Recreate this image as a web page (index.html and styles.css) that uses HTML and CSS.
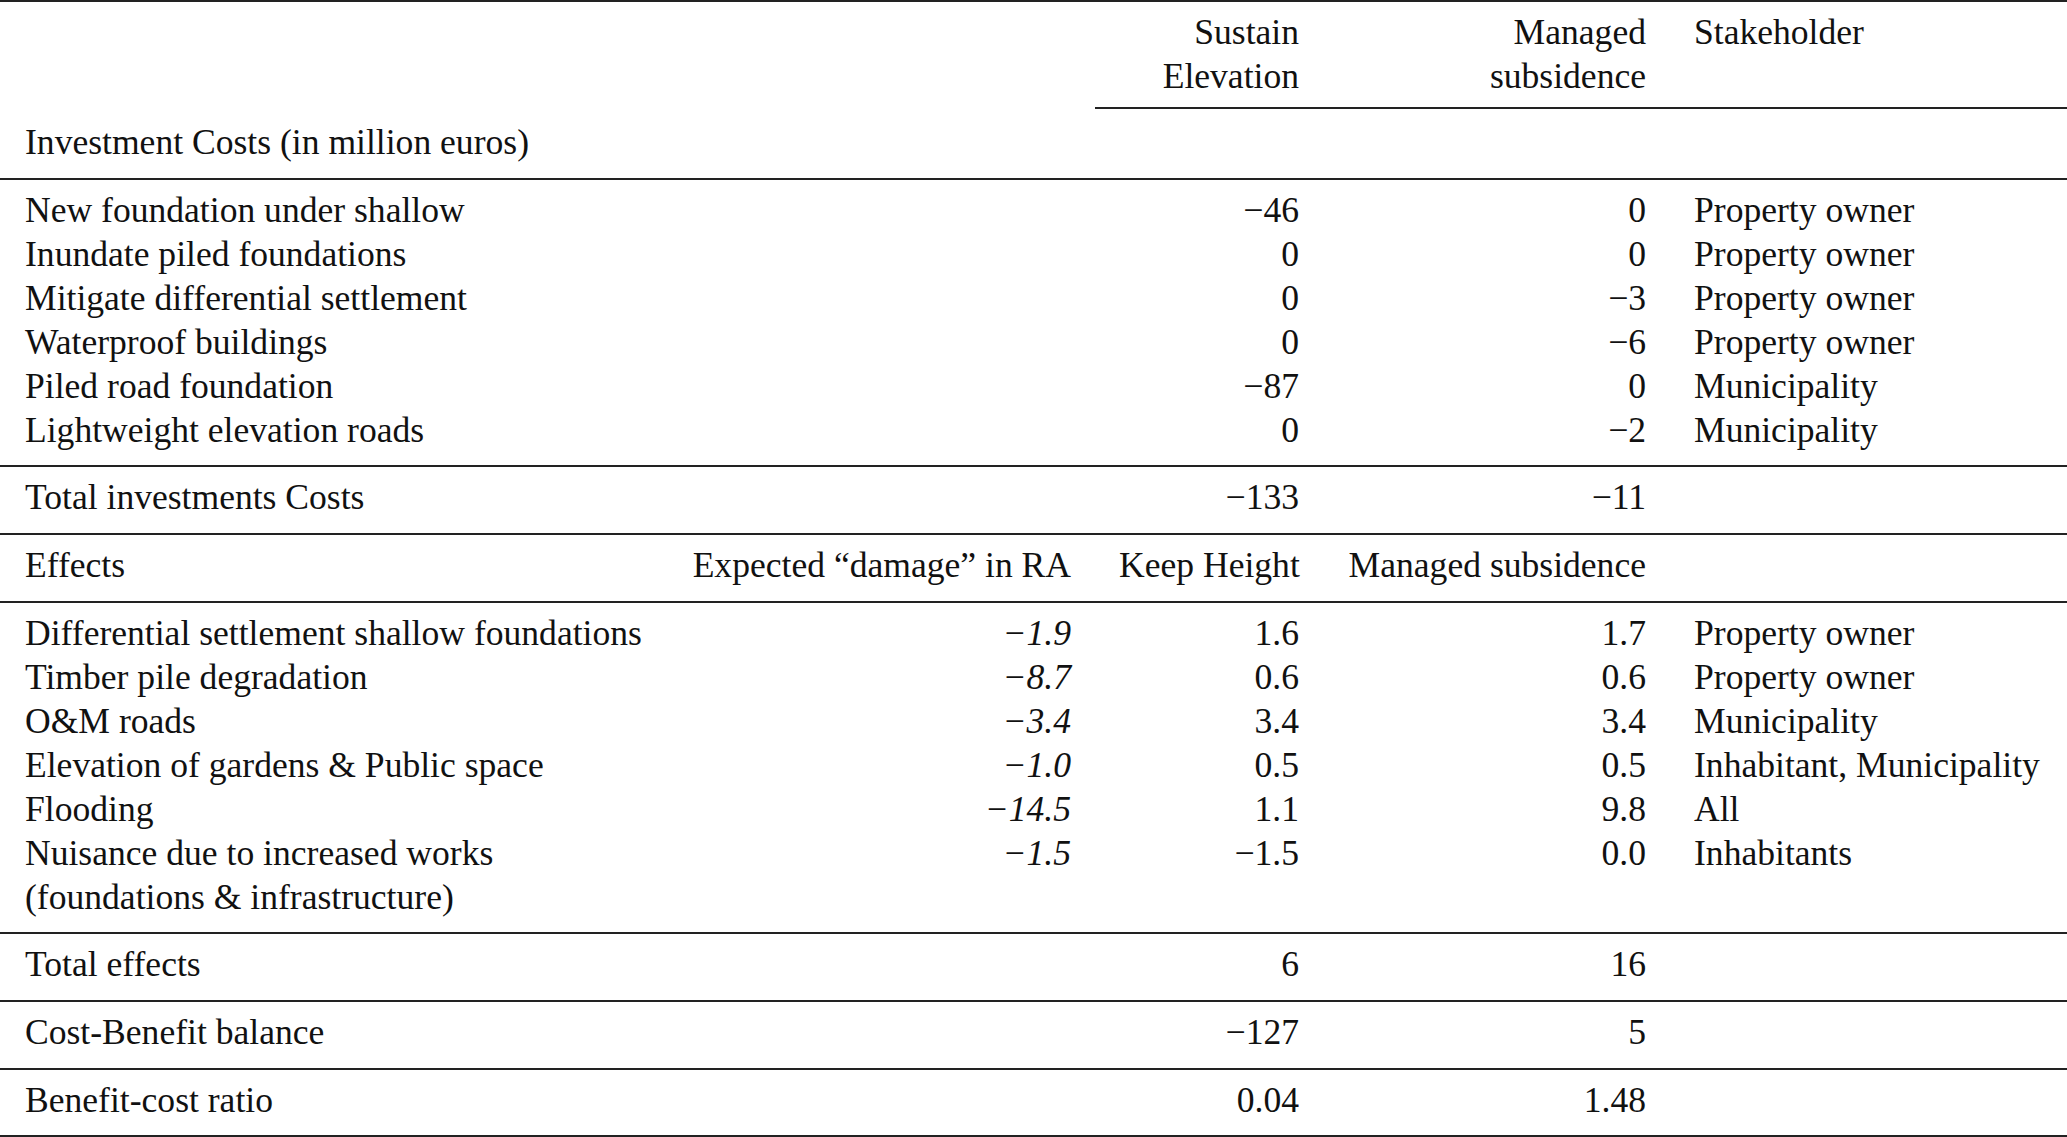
FILE: index.html
```html
<!DOCTYPE html>
<html lang="en">
<head>
<meta charset="utf-8">
<title>Cost-benefit table</title>
<link rel="stylesheet" href="styles.css">
</head>
<body>
<table class="cb">
  <colgroup>
    <col class="c-label">
    <col class="c-exp">
    <col class="c-keep">
    <col class="c-man">
    <col class="c-stake">
  </colgroup>
  <tbody>
    <tr class="head">
      <td></td>
      <td></td>
      <td class="r mid">Sustain<br>Elevation</td>
      <td class="r mid">Managed<br>subsidence</td>
      <td class="mid">Stakeholder</td>
    </tr>
    <tr class="sub">
      <td>Investment Costs (in million euros)</td>
      <td></td><td></td><td></td><td></td>
    </tr>

    <tr class="rule first">
      <td>New foundation under shallow</td><td></td>
      <td class="r">−46</td><td class="r">0</td><td>Property owner</td>
    </tr>
    <tr>
      <td>Inundate piled foundations</td><td></td>
      <td class="r">0</td><td class="r">0</td><td>Property owner</td>
    </tr>
    <tr>
      <td>Mitigate differential settlement</td><td></td>
      <td class="r">0</td><td class="r">−3</td><td>Property owner</td>
    </tr>
    <tr>
      <td>Waterproof buildings</td><td></td>
      <td class="r">0</td><td class="r">−6</td><td>Property owner</td>
    </tr>
    <tr>
      <td>Piled road foundation</td><td></td>
      <td class="r">−87</td><td class="r">0</td><td>Municipality</td>
    </tr>
    <tr class="last">
      <td>Lightweight elevation roads</td><td></td>
      <td class="r">0</td><td class="r">−2</td><td>Municipality</td>
    </tr>

    <tr class="rule single">
      <td>Total investments Costs</td><td></td>
      <td class="r">−133</td><td class="r">−11</td><td></td>
    </tr>

    <tr class="rule single">
      <td>Effects</td>
      <td class="r">Expected “damage” in RA</td>
      <td class="r">Keep Height</td>
      <td class="r">Managed subsidence</td>
      <td></td>
    </tr>

    <tr class="rule first">
      <td>Differential settlement shallow foundations</td>
      <td class="r it">−1.9</td><td class="r">1.6</td><td class="r">1.7</td><td>Property owner</td>
    </tr>
    <tr>
      <td>Timber pile degradation</td>
      <td class="r it">−8.7</td><td class="r">0.6</td><td class="r">0.6</td><td>Property owner</td>
    </tr>
    <tr>
      <td>O&amp;M roads</td>
      <td class="r it">−3.4</td><td class="r">3.4</td><td class="r">3.4</td><td>Municipality</td>
    </tr>
    <tr>
      <td>Elevation of gardens &amp; Public space</td>
      <td class="r it">−1.0</td><td class="r">0.5</td><td class="r">0.5</td><td>Inhabitant, Municipality</td>
    </tr>
    <tr>
      <td>Flooding</td>
      <td class="r it">−14.5</td><td class="r">1.1</td><td class="r">9.8</td><td>All</td>
    </tr>
    <tr class="last">
      <td>Nuisance due to increased works<br>(foundations &amp; infrastructure)</td>
      <td class="r it">−1.5</td><td class="r">−1.5</td><td class="r">0.0</td><td>Inhabitants</td>
    </tr>

    <tr class="rule single">
      <td>Total effects</td><td></td>
      <td class="r">6</td><td class="r">16</td><td></td>
    </tr>
    <tr class="rule single">
      <td>Cost-Benefit balance</td><td></td>
      <td class="r">−127</td><td class="r">5</td><td></td>
    </tr>
    <tr class="rule single final">
      <td>Benefit-cost ratio</td><td></td>
      <td class="r">0.04</td><td class="r">1.48</td><td></td>
    </tr>
  </tbody>
</table>
</body>
</html>
```

FILE: styles.css
```css
html, body {
  margin: 0;
  padding: 0;
  background: #ffffff;
}

.cb {
  width: 2067px;
  table-layout: fixed;
  border-collapse: separate;
  border-spacing: 0;
  border-top: 2px solid #222222;
  font-family: "Liberation Serif", "Times New Roman", serif;
  font-size: 35.6px;
  line-height: 44px;
  color: #111111;
}

.c-label { width: 668px; }
.c-exp { width: 427px; }
.c-keep { width: 228px; }
.c-man { width: 347px; }
.c-stake { width: 397px; }

.cb td {
  padding: 0 24px;
  vertical-align: top;
  white-space: nowrap;
  text-align: left;
}

.cb td:first-child {
  padding-left: 25px;
}

.cb td.r {
  text-align: right;
}

.cb td.it {
  font-style: italic;
}

.head td {
  padding-top: 8px;
  padding-bottom: 9px;
}

.head td.mid {
  border-bottom: 2px solid #222222;
}

.sub td {
  padding-top: 11px;
  padding-bottom: 14px;
}

.rule td {
  border-top: 2px solid #222222;
}

.first td {
  padding-top: 8px;
}

.last td {
  padding-bottom: 13px;
}

.single td {
  padding-top: 8px;
  padding-bottom: 14px;
}

.final td {
  padding-bottom: 13px;
  border-bottom: 2px solid #222222;
}
```
